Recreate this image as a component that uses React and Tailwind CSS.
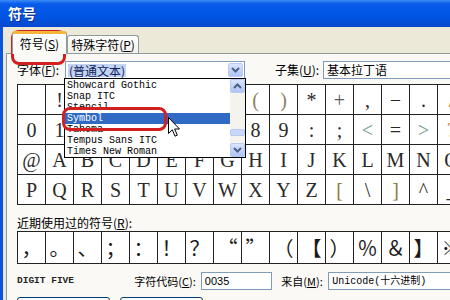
import React from 'react';

const cjk = "font-['Noto_Sans_CJK_SC',sans-serif]";

const gridRows = [
  [' ', '!', '"', '#', '$', '%', '&', "'", '(', ')', '*', '+', ',', '\u2212', '.', '/'],
  ['0', '1', '2', '3', '4', '5', '6', '7', '8', '9', ':', ';', '<', '=', '>', '?'],
  ['@', 'A', 'B', 'C', 'D', 'E', 'F', 'G', 'H', 'I', 'J', 'K', 'L', 'M', 'N', 'O'],
  ['P', 'Q', 'R', 'S', 'T', 'U', 'V', 'W', 'X', 'Y', 'Z', '[', '\\', ']', '^', '_'],
];

const tinted = {
  '(': 'text-[#8c8060]',
  ')': 'text-[#8c8060]',
  '<': 'text-[#6f9a88]',
  '>': 'text-[#6f9a88]',
  '+': 'text-[#5a5a5a]',
  '[': 'text-[#8a7a3a]',
  ']': 'text-[#8a7a3a]',
  '?': 'text-[#c08030]',
  '/': 'text-[#c08030]',
};

const recent = ['，', '。', '、', '；', '：', '！', '？', '“', '”', '（', '【', '）', '％', '＆', '】', '※'];

const fonts = ['Showcard Gothic', 'Snap ITC', 'Stencil', 'Symbol', 'Tahoma', 'Tempus Sans ITC', 'Times New Roman'];

const Chevron = ({ up }) => (
  <svg width="9" height="6" viewBox="0 0 9 6">
    <path d={up ? 'M1 5 L4.5 1.5 L8 5' : 'M1 1 L4.5 4.5 L8 1'} fill="none" stroke="#4d6185" strokeWidth="2" />
  </svg>
);

const ArrowButton = ({ up, className = '' }) => (
  <div className={`flex h-[14px] w-[15px] items-center justify-center rounded-[2px] border border-[#b9cbf3] bg-[linear-gradient(180deg,#dbe6fd_0%,#c2d3fa_55%,#adc4f6_100%)] ${className}`}>
    <Chevron up={up} />
  </div>
);

const FontList = () => (
  <div className="absolute left-[64px] top-[78px] flex h-[80px] w-[182px] border border-black bg-white">
    <div className="flex-1 pt-[1px]">
      {fonts.map((f) => (
        <div
          key={f}
          className={`h-[11px] overflow-hidden whitespace-nowrap pl-[2px] font-['Liberation_Mono',monospace] text-[10px] leading-[11px] ${f === 'Symbol' ? 'bg-[#316ac5] text-white' : 'text-black'}`}
        >
          {f}
        </div>
      ))}
    </div>
    <div className="flex w-[15px] flex-col bg-[#f4f3ee]">
      <ArrowButton up />
      <div className="flex-1 pt-[36px]">
        <div className="h-[7px] w-[15px] rounded-[2px] border border-[#b9cbf3] bg-[#c8d7fb]" />
      </div>
      <ArrowButton />
    </div>
  </div>
);

const Cursor = () => (
  <svg className="absolute left-[168px] top-[117px]" width="13" height="21" viewBox="0 0 13 21">
    <path d="M0.5 0.5 L0.5 16.5 L4.3 12.8 L7 19.2 L9.3 18.2 L6.7 12 L11.5 12 Z" fill="white" stroke="black" strokeWidth="1" />
  </svg>
);

const Key = ({ children }) => <span className="underline">{children}</span>;

export default function App() {
  return (
    <div className={`relative h-[300px] w-[450px] overflow-hidden bg-[#ece9d8] ${cjk}`}>
      <div className="flex h-[27px] items-center bg-[linear-gradient(180deg,#3b8cf5_0%,#0a5ceb_14%,#0055e5_60%,#0848cb_100%)] pl-[8px]">
        <span className="text-[14px] font-bold text-white [text-shadow:1px_1px_0_#0a2a8a]">符号</span>
      </div>

      <div className="flex h-[273px]">
        <div className="w-[3px] shrink-0 bg-[#0a55dc]" />
        <div className="flex flex-1 flex-col overflow-hidden pl-[3px]">
          <div className="flex h-[26px] shrink-0 items-end pl-[6px]">
            <div className="relative z-10 mb-[-1px] flex h-[23px] w-[55px] items-center justify-center whitespace-nowrap rounded-t-[3px] border border-b-0 border-[#919b9c] border-t-[3px] border-t-[#f5b53c] bg-[#fbfbf7] text-[12px] text-black">
              符号(<Key>S</Key>)
            </div>
            <div className="flex h-[18px] w-[72px] items-center justify-center whitespace-nowrap rounded-t-[3px] border border-b-0 border-[#919b9c] bg-[linear-gradient(180deg,#ffffff_0%,#f1f0ea_100%)] text-[12px] text-black">
              特殊字符(<Key>P</Key>)
            </div>
          </div>

          <div className="flex w-[470px] flex-1 shrink-0 flex-col border border-[#919b9c] bg-[#faf9f5] pl-[10px]">
            <div className="mt-[7px] flex h-[18px] items-center whitespace-nowrap text-[12px] text-black">
              <span className="w-[48px]">字体(<Key>F</Key>):</span>
              <div className="flex h-[18px] w-[180px] items-center justify-between border border-[#7f9db9] bg-white pl-[2px] pr-[1px]">
                <span className="bg-[#c3d4f2] px-[1px] leading-[13px] text-[#10215a]">(普通文本)</span>
                <ArrowButton />
              </div>
              <span className="ml-[30px] w-[48px]">子集(<Key>U</Key>):</span>
              <div className="flex h-[18px] w-[150px] items-center border border-[#7f9db9] bg-white pl-[3px]">基本拉丁语</div>
            </div>

            <div className="mt-[5px] w-[449px] border-l border-t border-[#222] bg-white">
              {gridRows.map((row, r) => (
                <div key={r} className="flex">
                  {row.map((ch, c) => (
                    <div
                      key={c}
                      className={`flex h-[30px] w-[28px] shrink-0 items-center justify-center border-b border-r border-[#222] font-['Liberation_Serif',serif] text-[20px] ${tinted[ch] || 'text-[#2a2a2a]'}`}
                    >
                      {ch}
                    </div>
                  ))}
                </div>
              ))}
            </div>

            <div className="mt-[11px] h-[14px] whitespace-nowrap text-[12px] leading-[14px] text-black">
              近期使用过的符号(<Key>R</Key>):
            </div>

            <div className="mt-[1px] flex w-[449px] border-l border-t border-[#222] bg-white">
              {recent.map((ch, i) => (
                <div
                  key={i}
                  className="flex h-[32px] w-[28px] shrink-0 items-center justify-center border-b border-r border-[#222] text-[20px] text-[#1a1a1a]"
                >
                  {ch}
                </div>
              ))}
            </div>

            <div className="mt-[8px] flex h-[18px] items-center whitespace-nowrap text-[11px] text-black">
              <span className="w-[120px] font-['Liberation_Mono',monospace] text-[9.5px] font-bold text-[#222]">DIGIT FIVE</span>
              <span className="w-[68px]">字符代码(<Key>C</Key>):</span>
              <div className="flex h-[18px] w-[73px] items-center border border-[#7f9db9] bg-white pl-[3px] font-['Liberation_Sans',sans-serif] text-[11px]">0035</div>
              <span className="ml-[9px] w-[48px]">来自(<Key>M</Key>):</span>
              <div className="flex h-[18px] w-[150px] items-center border border-[#7f9db9] bg-white pl-[3px] font-['Liberation_Mono','Noto_Sans_CJK_SC',monospace] text-[10px]">Unicode(十六进制)</div>
            </div>

            <div className="mt-[7px] flex items-start whitespace-nowrap text-[12px]">
              <div className="flex h-[23px] w-[93px] items-center justify-center rounded-[3px] border border-[#003c74] bg-[linear-gradient(180deg,#ffffff_0%,#ecebe6_100%)]">自动更正(A)...</div>
              <div className="ml-[10px] flex h-[23px] w-[83px] items-center justify-center rounded-[3px] border border-[#003c74] bg-[linear-gradient(180deg,#ffffff_0%,#ecebe6_100%)]">快捷键(K)...</div>
              <span className="ml-[7px] pt-[2px]">快捷键: Alt+X</span>
            </div>
          </div>
        </div>
      </div>

      <FontList />
      <div className="absolute left-[11px] top-[30px] h-[35px] w-[55px] rounded-[8px] border-[3px] border-[#d21f1f]" />
      <div className="absolute left-[62px] top-[107px] h-[24px] w-[105px] rounded-[8px] border-[3px] border-[#d21f1f]" />
      <Cursor />
    </div>
  );
}
